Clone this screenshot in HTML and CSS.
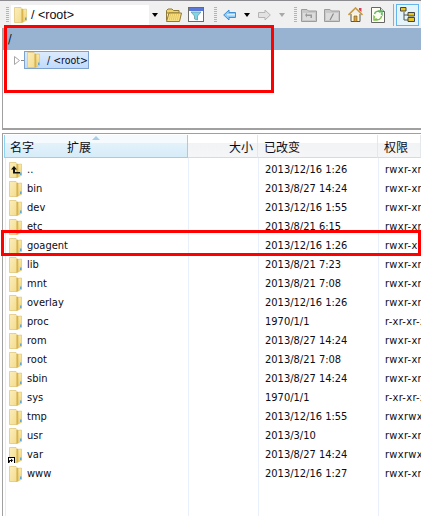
FILE: index.html
```html
<!DOCTYPE html>
<html lang="zh">
<head>
  <meta charset="UTF-8">
  <title>/ &lt;root&gt;</title>
  <link rel="stylesheet" href="styles.css">
</head>
<body>
  <svg class="defs" width="0" height="0">
    <defs>
      <linearGradient id="paleFold" x1="0" y1="0" x2="1" y2="1">
        <stop offset="0" stop-color="#fbeebc"/>
        <stop offset="1" stop-color="#f4dc8c"/>
      </linearGradient>
      <linearGradient id="shine" x1="0" y1="0" x2="0" y2="1">
        <stop offset="0" stop-color="#f9e8a4"/>
        <stop offset="1" stop-color="#eed07a"/>
      </linearGradient>
      <symbol id="folder" viewBox="0 0 13 16">
        <path d="M7 2.5L12.5 2V13.5L7 15.5Z" fill="url(#shine)" stroke="#dcc068" stroke-width=".6"/>
        <path d="M.5 .5H7L8 1.5V15.5H.5Z" fill="url(#paleFold)" stroke="#dcc172" stroke-width=".7"/>
        <path d="M7.5 2H9.3V15.5H7.5Z" fill="#d9b44e"/>
        <path d="M11 10.5h1.5v2.5H11Z" fill="#5fa8dc"/>
      </symbol>
    </defs>
  </svg>

  <div class="toolbar">
    <span class="grip"></span>
    <div class="combo">
      <svg class="folder-ico"><use href="#folder"/></svg>
      <span class="combo-text">/ &lt;root&gt;</span>
      <span class="combo-arrow"><i class="caret"></i></span>
    </div>
    <svg class="tb-ico m5" width="16" height="14" viewBox="0 0 16 14">
      <path d="M.5 12.5V2.5L2 1H6L7.5 2.5H13V5H.5" fill="#f0d468" stroke="#8f7a3a"/>
      <path d="M.5 13.5L3 5H15.5L13.5 13.5Z" fill="#f7de80" stroke="#8f7a3a"/>
      <path d="M4 7H14M3.5 9H13.5M3 11H13" stroke="#d9b64a" stroke-dasharray="1 1"/>
    </svg>
    <svg class="tb-ico m6" width="16" height="15" viewBox="0 0 16 15">
      <rect x=".5" y=".5" width="15" height="14" fill="#fff" stroke="#6b6b6b"/>
      <rect x="1" y="1" width="14" height="3" fill="#5a78d8"/>
      <path d="M3 5H13L9.5 9V13L6.5 12V9Z" fill="#7fd6e6" stroke="#6b8f9a" stroke-width=".7"/>
    </svg>
    <span class="grip m10"></span>
    <svg class="tb-ico m6" width="13" height="12" viewBox="0 0 13 12">
      <path d="M.7 6L6 1V3.5H12.5V8.5H6V11Z" fill="#8ecbf7" stroke="#3f8fd0"/>
      <path d="M4 5H12V6.5H4Z" fill="#d5eeff"/>
    </svg>
    <i class="caret m8"></i>
    <svg class="tb-ico m8" width="13" height="12" viewBox="0 0 13 12">
      <path d="M12.3 6L7 1V3.5H.5V8.5H7V11Z" fill="#e2e2e2" stroke="#b4b4b4"/>
    </svg>
    <i class="caret off m8"></i>
    <span class="grip m9"></span>
    <svg class="tb-ico m4" width="16" height="14" viewBox="0 0 16 14">
      <path d="M.5 13.5V1.5H6L7.5 3H15.5V13.5Z" fill="#c9c9c9" stroke="#9c9c9c"/>
      <path d="M2 5H14V12H2Z" fill="#dcdcdc"/>
      <path d="M4 7L6 5V6.5H11V10H9.5V8H6V9.5Z" fill="#9a9a9a"/>
    </svg>
    <svg class="tb-ico m7" width="16" height="14" viewBox="0 0 16 14">
      <path d="M.5 13.5V1.5H6L7.5 3H15.5V13.5Z" fill="#c9c9c9" stroke="#9c9c9c"/>
      <path d="M2 5H14V12H2Z" fill="#dcdcdc"/>
      <path d="M6 12L9.5 5.5" stroke="#8a8a8a" stroke-width="1.2"/>
    </svg>
    <svg class="tb-ico m8" width="15" height="15" viewBox="0 0 15 15">
      <path d="M3 7V14.5H12V7" fill="#fff6d8" stroke="#555"/>
      <path d="M.5 8L7.5 1L14.5 8" fill="none" stroke="#c89a3c" stroke-width="1.6"/>
      <path d="M11 1H13.5V5L11 3Z" fill="#d8405a"/>
      <path d="M6 9H9V14.5H6Z" fill="#e8a020" stroke="#555" stroke-width=".6"/>
    </svg>
    <svg class="tb-ico m8" width="14" height="16" viewBox="0 0 14 16">
      <path d="M.5 .5H9.5L13.5 4.5V15.5H.5Z" fill="#fdfdf4" stroke="#666"/>
      <path d="M9.5 .5V4.5H13.5" fill="#ddd" stroke="#666"/>
      <path d="M3.5 7A3.5 3.5 0 0 1 9.5 5.5L8.5 4H11V7.5L10 6.5" fill="none" stroke="#5cb85c" stroke-width="1.4"/>
      <path d="M10.5 9A3.5 3.5 0 0 1 4.5 11.5L5.5 13H3V9.5L4 10.5" fill="none" stroke="#7cc04c" stroke-width="1.4"/>
    </svg>
    <span class="tb-sep"></span>
    <span class="tree-btn">
      <svg width="17" height="17" viewBox="0 0 17 17">
        <path d="M5 6V14H9M5 9H9" fill="none" stroke="#555"/>
        <path d="M1.5 1.5H7V5H1.5ZM9 6.5H15.5V10H9ZM9 11.5H15.5V15.5H9Z" fill="#e8c820" stroke="#444"/>
      </svg>
    </span>
  </div>

  <section class="tree-pane">
    <div class="path-bar">/</div>
    <div class="tree">
      <svg class="expander" width="6" height="9" viewBox="0 0 6 9"><path d="M.5 .5L5.5 4.5L.5 8.5Z" fill="#fff" stroke="#a6a6a6"/></svg>
      <span class="tree-dots"></span>
      <span class="tree-node">
        <svg class="folder-ico"><use href="#folder"/></svg>
        <span class="node-text">/ &lt;root&gt;</span>
      </span>
    </div>
  </section>

  <section class="file-pane">
    <div class="head">
      <div class="hcell hname"><span>名字</span><span class="ext">扩展</span><i class="sort"></i></div>
      <div class="hcell hsize">大小</div>
      <div class="hcell">已改变</div>
      <div class="hcell">权限</div>
    </div>
    <div class="rows">
      <div class="row"><div class="name"><svg class="folder-ico"><use href="#folder"/></svg><svg class="up-mark" width="9" height="9" viewBox="0 0 9 9"><path d="M3 0L0 3.5H2V7.5H9V6H4V3.5H6Z" fill="#111"/></svg>..</div><div></div><div>2013/12/16 1:26</div><div>rwxr-xr-x</div></div>
      <div class="row"><div class="name"><svg class="folder-ico"><use href="#folder"/></svg>bin</div><div></div><div>2013/8/27 14:24</div><div>rwxr-xr-x</div></div>
      <div class="row"><div class="name"><svg class="folder-ico"><use href="#folder"/></svg>dev</div><div></div><div>2013/12/16 1:55</div><div>rwxr-xr-x</div></div>
      <div class="row"><div class="name"><svg class="folder-ico"><use href="#folder"/></svg>etc</div><div></div><div>2013/8/21 6:15</div><div>rwxr-xr-x</div></div>
      <div class="row"><div class="name"><svg class="folder-ico"><use href="#folder"/></svg>goagent</div><div></div><div>2013/12/16 1:26</div><div>rwxr-xr-x</div></div>
      <div class="row"><div class="name"><svg class="folder-ico"><use href="#folder"/></svg>lib</div><div></div><div>2013/8/21 7:23</div><div>rwxr-xr-x</div></div>
      <div class="row"><div class="name"><svg class="folder-ico"><use href="#folder"/></svg>mnt</div><div></div><div>2013/8/21 7:08</div><div>rwxr-xr-x</div></div>
      <div class="row"><div class="name"><svg class="folder-ico"><use href="#folder"/></svg>overlay</div><div></div><div>2013/12/16 1:26</div><div>rwxr-xr-x</div></div>
      <div class="row"><div class="name"><svg class="folder-ico"><use href="#folder"/></svg>proc</div><div></div><div>1970/1/1</div><div>r-xr-xr-x</div></div>
      <div class="row"><div class="name"><svg class="folder-ico"><use href="#folder"/></svg>rom</div><div></div><div>2013/8/27 14:24</div><div>rwxr-xr-x</div></div>
      <div class="row"><div class="name"><svg class="folder-ico"><use href="#folder"/></svg>root</div><div></div><div>2013/8/21 7:08</div><div>rwxr-xr-x</div></div>
      <div class="row"><div class="name"><svg class="folder-ico"><use href="#folder"/></svg>sbin</div><div></div><div>2013/8/27 14:24</div><div>rwxr-xr-x</div></div>
      <div class="row"><div class="name"><svg class="folder-ico"><use href="#folder"/></svg>sys</div><div></div><div>1970/1/1</div><div>r-xr-xr-x</div></div>
      <div class="row"><div class="name"><svg class="folder-ico"><use href="#folder"/></svg>tmp</div><div></div><div>2013/12/16 1:55</div><div>rwxrwxrwx</div></div>
      <div class="row"><div class="name"><svg class="folder-ico"><use href="#folder"/></svg>usr</div><div></div><div>2013/3/10</div><div>rwxr-xr-x</div></div>
      <div class="row"><div class="name"><svg class="folder-ico"><use href="#folder"/></svg><span class="link-mark"><svg width="5" height="5" viewBox="0 0 5 5"><path d="M.5 4.5V2.5H3M2 .8L3.6 2.5L2 4" fill="none" stroke="#000"/></svg></span>var</div><div></div><div>2013/8/27 14:24</div><div>rwxrwxrwx</div></div>
      <div class="row"><div class="name"><svg class="folder-ico"><use href="#folder"/></svg>www</div><div></div><div>2013/12/16 1:27</div><div>rwxr-xr-x</div></div>
    </div>
  </section>

  <!-- red marks drawn over the screenshot -->
  <div class="mark mark-tree"></div>
  <div class="mark mark-row"></div>
</body>
</html>
```

FILE: styles.css
```css
* {
  box-sizing: border-box;
}

html, body {
  margin: 0;
  height: 516px;
  overflow: hidden;
}

body {
  position: relative;
  display: flex;
  flex-direction: column;
  width: 421px;
  background-color: #fff;
  color: #0c0c16;
  font-family: "DejaVu Sans", "Noto Sans CJK SC", sans-serif;
  font-stretch: condensed;
  font-size: 11px;
}

.defs {
  position: absolute;
}

.folder-ico {
  width: 13px;
  height: 16px;
  flex: none;
}

/* toolbar */
.toolbar {
  display: flex;
  align-items: center;
  height: 28px;
  padding-left: 6px;
  border-top: 1px solid #8c8c90;
  background-color: #f0f0f0;
}

.grip {
  width: 3px;
  height: 15px;
  flex: none;
  background: repeating-linear-gradient(#b4b4b4 0 1px, #f0f0f0 1px 2px);
}

.combo {
  display: flex;
  align-items: center;
  width: 150px;
  height: 20px;
  margin-left: 2px;
  padding-left: 3px;
  background-color: #fff;
}

.combo-text {
  margin-left: 4px;
  font-family: "Liberation Sans", sans-serif;
  font-stretch: normal;
  font-size: 12.5px;
}

.combo-arrow {
  display: flex;
  align-items: center;
  justify-content: center;
  width: 12px;
  height: 20px;
  margin-left: auto;
  background-color: #f0f0f0;
}

.caret {
  width: 0;
  height: 0;
  flex: none;
  border-left: 3px solid transparent;
  border-right: 3px solid transparent;
  border-top: 4px solid #000;
}

.caret.off {
  border-top-color: #a8a8a8;
}

.tb-ico {
  flex: none;
}

.m4 { margin-left: 4px; }
.m5 { margin-left: 5px; }
.m6 { margin-left: 6px; }
.m7 { margin-left: 7px; }
.m8 { margin-left: 8px; }
.m9 { margin-left: 9px; }
.m10 { margin-left: 10px; }

.tb-sep {
  width: 1px;
  height: 22px;
  margin-left: 8px;
  background-color: #a8a8a8;
}

.tree-btn {
  display: flex;
  align-items: center;
  justify-content: center;
  width: 23px;
  height: 22px;
  margin-left: 2px;
  border: 1px solid #66b4ec;
  background-color: #e5f3fb;
}

/* upper pane */
.tree-pane {
  height: 102px;
  margin-left: 2px;
  border-left: 1px solid #a0a0a0;
  border-bottom: 2px solid #a0a0a0;
  flex: none;
}

.path-bar {
  height: 22px;
  padding-left: 5px;
  background-color: #97b3d1;
  font-size: 12px;
  line-height: 22px;
}

.tree {
  display: flex;
  align-items: center;
  height: 18px;
  margin-top: 1px;
  padding-left: 11px;
}

.tree-dots {
  width: 2px;
  margin: 0 1px;
  border-top: 1px dotted #888;
}

.tree-node {
  display: flex;
  align-items: center;
  width: 65px;
  height: 18px;
  padding-left: 2px;
  border: 1px solid #7da2ce;
  background: linear-gradient(#dcebfc, #c1dbfc);
}

.node-text {
  margin-left: 7px;
  font-size: 10.5px;
  white-space: nowrap;
}

/* file list */
.file-pane {
  display: flex;
  flex-direction: column;
  flex: 1;
  margin: 3px 0 0 2px;
  border-left: 1px solid #a0a0a0;
  border-top: 1px solid #a0a0a0;
  padding-left: 1px;
  font-size: 11px;
}

.head {
  display: grid;
  grid-template-columns: 184px 70px 120px 43px;
  height: 23px;
  margin-top: 1px;
  font-family: "Noto Sans CJK SC", sans-serif;
  font-stretch: normal;
  font-size: 12px;
}

.hcell {
  display: flex;
  align-items: center;
  padding-left: 6px;
  border-right: 1px solid #e4e8ec;
  border-bottom: 1px solid #d8dadc;
  background: linear-gradient(#fff 35%, #f2f3f5 36%, #f5f6f7);
  white-space: nowrap;
  overflow: hidden;
}

.hname {
  position: relative;
  border: 1px solid #8fd4f3;
  border-top: 0;
  padding-left: 5px;
  background: linear-gradient(#f4fafe 35%, #e4f2fa 36%, #d6ecf8);
}

.ext {
  margin-left: 33px;
}

.sort {
  position: absolute;
  left: 87px;
  top: 1px;
  width: 0;
  height: 0;
  border-left: 4px solid transparent;
  border-right: 4px solid transparent;
  border-bottom: 4px solid #a8cde4;
}

.hsize {
  justify-content: flex-end;
  padding-right: 4px;
}

.rows {
  flex: 1;
  padding-top: 2px;
  background:
    linear-gradient(#e4edfa, #e4edfa) 1px 0 / 1px 100% no-repeat,
    linear-gradient(#e9f0fb, #e9f0fb) 184px 0 / 1px 100% no-repeat,
    linear-gradient(#e9f0fb, #e9f0fb) 254px 0 / 1px 100% no-repeat,
    linear-gradient(#e9f0fb, #e9f0fb) 374px 0 / 1px 100% no-repeat;
}

.row {
  display: grid;
  grid-template-columns: 184px 70px 120px 43px;
  align-items: center;
  height: 19px;
  white-space: nowrap;
}

.row > div {
  overflow: hidden;
  padding-left: 7px;
}

.row > div:last-child {
  letter-spacing: .3px;
}

.row > .name {
  position: relative;
  display: flex;
  align-items: center;
  gap: 5px;
  padding-left: 5px;
}

.up-mark {
  position: absolute;
  left: 7px;
  top: 4px;
}

.link-mark {
  position: absolute;
  left: 4px;
  top: 10px;
  display: flex;
  align-items: center;
  justify-content: center;
  width: 7px;
  height: 7px;
  border: 1px solid #000;
  background-color: #fff;
}

/* red annotations */
.mark {
  position: absolute;
  border: 3px solid #f00;
}

.mark-tree {
  left: 4px;
  top: 25px;
  width: 270px;
  height: 68px;
}

.mark-row {
  left: 1px;
  top: 230px;
  width: 420px;
  height: 26px;
}
```
